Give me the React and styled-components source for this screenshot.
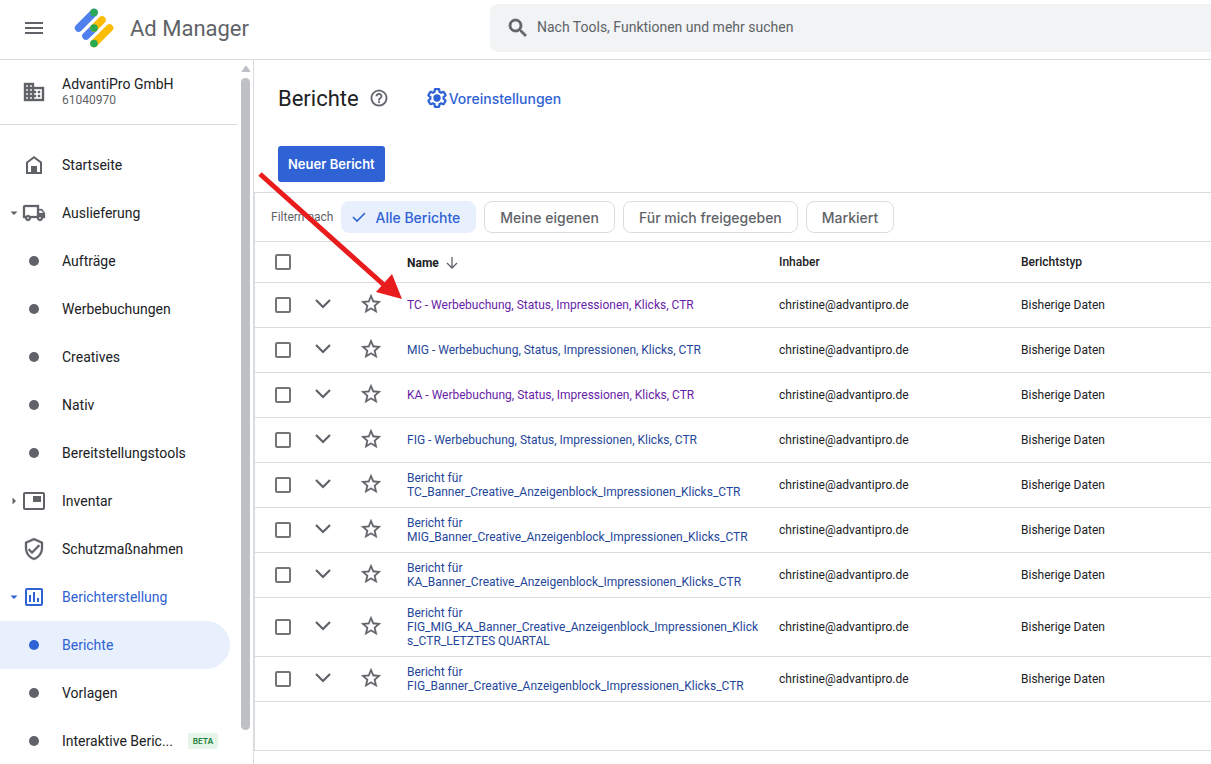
import styled, { createGlobalStyle } from 'styled-components'
import { MdMenu, MdSearch, MdDomain, MdOutlineLocalShipping, MdOutlineVerifiedUser, MdStarBorder, MdHelpOutline } from 'react-icons/md'

const GlobalStyle = createGlobalStyle`
    * {
        box-sizing: border-box;
    }
    body {
        margin: 0;
        background: #fff;
        color: #202124;
        font-family: Roboto, sans-serif;
        font-size: 12px;
    }
    svg {
        display: block;
        flex: none;
    }
    /* the material icons carry an empty bounding path */
    svg[stroke] path[fill='none'] {
        stroke: none;
    }
`
const Page = styled.div`
    position: relative;
    display: flex;
    flex-direction: column;
    height: 100vh;
    overflow: hidden;
`
const TopBar = styled.header`
    display: flex;
    flex: none;
    height: 60px;
    border-bottom: 1px solid #dadce0;
`
const Brand = styled.div`
    display: flex;
    flex: none;
    align-items: center;
    width: 490px;
    height: 56px;
    padding-left: 22px;
    color: #5f6368;
`
const IconButton = styled.button`
    display: inline-flex;
    padding: 0;
    border: 0;
    background: none;
    color: #5f6368;
    vertical-align: middle;
`
const Logo = styled.svg`
    margin: 0 16px 0 28px;
`
const BrandName = styled.span`
    font-size: 22px;
`
const SearchBox = styled.label`
    display: flex;
    flex: 1;
    align-items: center;
    gap: 7px;
    height: 48px;
    margin-top: 4px;
    padding-left: 16px;
    border-radius: 8px 0 0 8px;
    background: #f1f3f4;
    color: #5f6368;
`
const SearchInput = styled.input`
    flex: 1;
    height: 24px;
    padding: 0 0 2px;
    border: 0;
    outline: 0;
    background: none;
    font-family: inherit;
    font-size: 14px;

    &::placeholder {
        color: #5f6368;
        opacity: 1;
    }
`
const Body = styled.div`
    display: flex;
    flex: 1;
    min-height: 0;
`
const Sidebar = styled.aside`
    display: flex;
    flex: none;
    width: 254px;
    border-right: 1px solid #dadce0;
`
const SideContent = styled.div`
    flex: 1;
    overflow: hidden;
`
const Account = styled.div`
    display: flex;
    align-items: center;
    gap: 16px;
    height: 65px;
    padding-left: 22px;
    border-bottom: 1px solid #dadce0;
    color: #5f6368;
    line-height: 16px;
`
const AccountName = styled.div`
    color: #202124;
    font-size: 14px;
`
const Nav = styled.nav`
    padding-top: 16px;
`
const NavLink = styled.a`
    display: flex;
    align-items: center;
    width: 230px;
    height: 48px;
    padding-left: 10px;
    border-radius: 0 24px 24px 0;
    background: ${p => p.$active ? '#e8f0fe' : 'transparent'};
    color: ${p => p.$blue ? '#2f62d4' : '#202124'};
    font-size: 14px;
    text-decoration: none;
    white-space: nowrap;
`
const NavIcon = styled.span`
    display: flex;
    align-items: center;
    gap: 4px;
    width: 52px;
    color: ${p => p.$blue ? '#2f62d4' : '#5f6368'};
`
const IconSlot = styled.span`
    display: flex;
    justify-content: center;
    width: 24px;
`
const Dot = styled.span`
    width: 10px;
    height: 10px;
    border-radius: 50%;
    background: currentColor;
`
const Beta = styled.span`
    margin-left: auto;
    margin-right: 12px;
    width: 30px;
    border-radius: 2px;
    background: #e6f4ea;
    color: #188038;
    font-family: Inter, sans-serif;
    font-size: 8px;
    font-weight: 600;
    line-height: 16px;
    text-align: center;
`
const ScrollBar = styled.div`
    display: flex;
    flex-direction: column;
    align-items: center;
    gap: 5px;
    width: 15px;
    padding: 5px 0 34px;
    color: #bdc1c6;
`
const Thumb = styled.div`
    flex: 1;
    width: 9px;
    border-radius: 5px;
    background: #bdc1c6;
`
const Main = styled.main`
    flex: 1;
    min-width: 0;
`
const TitleRow = styled.div`
    display: flex;
    align-items: center;
    height: 76px;
    padding-left: 24px;
`
const Title = styled.h1`
    margin: 0 10px 0 0;
    font-size: 22px;
    font-weight: 400;
`
const Settings = styled.button`
    display: flex;
    align-items: center;
    margin-left: 36px;
    padding: 0;
    border: 0;
    background: none;
    color: #2f62d4;
    font-family: Inter, sans-serif;
    font-size: 14px;
    font-weight: 500;
`
const NewReport = styled.button`
    display: block;
    height: 36px;
    margin: 10px 24px;
    padding: 0 10px;
    border: 0;
    border-radius: 3px;
    background: #2f62d4;
    color: #fff;
    font-family: Inter, sans-serif;
    font-size: 13px;
    font-weight: 600;
`
const Panel = styled.section`
    border: 1px solid #dadce0;
    border-right: 0;
    padding-bottom: 48px;
`
const Filters = styled.div`
    display: flex;
    align-items: center;
    gap: 8px;
    height: 49px;
    padding-left: 16px;
    border-bottom: 1px solid #dadce0;
    color: #5f6368;
    white-space: nowrap;
`
const Chip = styled.button`
    display: flex;
    align-items: center;
    gap: 8px;
    height: 32px;
    padding: 0 15px;
    padding-left: ${p => p.$active ? 9 : 15}px;
    border: 1px solid ${p => p.$active ? '#e8f0fe' : '#dadce0'};
    border-radius: 8px;
    background: ${p => p.$active ? '#e8f0fe' : '#fff'};
    color: ${p => p.$active ? '#2f62d4' : '#5f6368'};
    font-family: Inter, sans-serif;
    font-size: 14px;
    font-weight: 500;
`
const Table = styled.table`
    width: 100%;
    table-layout: fixed;
    border-collapse: separate;
    border-spacing: 0;
    line-height: 14px;
`
const Col = styled.col`
    width: ${p => p.$w}px;
`
const Th = styled.th`
    height: 41px;
    padding: 0 8px;
    border-bottom: 1px solid #dadce0;
    font-weight: ${p => p.$sorted ? 700 : 500};
    text-align: left;
`
const Sort = styled.span`
    display: flex;
    align-items: center;
    gap: 7px;
    padding-top: 2px;
`
const Td = styled.td`
    height: 45px;
    padding: 8px;
    border-bottom: 1px solid #dadce0;
    overflow-wrap: break-word;
`
const Center = styled.div`
    display: flex;
    justify-content: center;
    padding-bottom: 2px;
`
const CheckCell = styled.div`
    display: flex;
    padding-left: 12px;
`
const Check = styled.input`
    appearance: none;
    width: 16px;
    height: 16px;
    margin: 0;
    border: 2px solid #757575;
    border-radius: 2px;
    background: #fff;
`
const ReportLink = styled.a`
    color: ${p => p.$visited ? '#681da8' : '#1f479b'};
    text-decoration: none;
`
const Arrow = styled.svg`
    position: absolute;
    left: 256px;
    top: 170px;
    pointer-events: none;
`

const HomeIcon = () => (
    <svg width="24" height="24" viewBox="0 0 24 24">
        <path d="M5 9.5 12 4.2l7 5.3V20H5z" fill="none" stroke="currentColor" strokeWidth="2" />
        <path d="M9 13h6v7H9z" fill="currentColor" />
    </svg>
)
const InventoryIcon = () => (
    <svg width="24" height="24" viewBox="0 0 24 24">
        <rect x="2" y="4" width="20" height="16" rx="1" fill="none" stroke="currentColor" strokeWidth="2" />
        <path d="M11 7h8v6h-8z" fill="currentColor" />
    </svg>
)
const ChartIcon = () => (
    <svg width="24" height="24" viewBox="0 0 24 24">
        <rect x="4" y="4" width="16" height="16" rx="1" fill="none" stroke="currentColor" strokeWidth="2" />
        <path d="M7 10h2v7H7zM11 7h2v10h-2zM15 13h2v4h-2z" fill="currentColor" />
    </svg>
)
const GearIcon = () => (
    <svg width="24" height="24" viewBox="-1 -1 26 26">
        <path fill="none" stroke="currentColor" strokeWidth="2.4" d="M19.14 12.94c.04-.3.06-.61.06-.94 0-.32-.02-.64-.07-.94l2.03-1.58c.18-.14.23-.41.12-.61l-1.92-3.32c-.12-.22-.37-.29-.59-.22l-2.39.96c-.5-.38-1.03-.7-1.62-.94l-.36-2.54c-.04-.24-.24-.41-.48-.41h-3.84c-.24 0-.43.17-.47.41l-.36 2.54c-.59.24-1.13.57-1.62.94l-2.39-.96c-.22-.08-.47 0-.59.22L2.74 8.87c-.12.21-.08.47.12.61l2.03 1.58c-.05.3-.09.63-.09.94s.02.64.07.94l-2.03 1.58c-.18.14-.23.41-.12.61l1.92 3.32c.12.22.37.29.59.22l2.39-.96c.5.38 1.03.7 1.62.94l.36 2.54c.05.24.24.41.48.41h3.84c.24 0 .44-.17.47-.41l.36-2.54c.59-.24 1.13-.56 1.62-.94l2.39.96c.22.08.47 0 .59-.22l1.92-3.32c.12-.22.07-.47-.12-.61z" />
        <circle cx="12" cy="12" r="4" fill="currentColor" />
    </svg>
)
const ChevronIcon = () => (
    <svg width="24" height="24" viewBox="0 0 24 24">
        <path d="m5 8 7 7 7-7" fill="none" stroke="currentColor" strokeWidth="2.2" />
    </svg>
)
const Caret = ({ dir }) => (
    <svg width="8" height="8" viewBox="0 0 8 8">
        {dir === 'down' && <path d="M.5 2.5h7L4 6z" fill="currentColor" />}
        {dir === 'right' && <path d="M2.5.5v7L6 4z" fill="currentColor" />}
    </svg>
)

const navItems = [
    { text: 'Startseite', icon: <HomeIcon /> },
    { text: 'Auslieferung', icon: <MdOutlineLocalShipping size={24} strokeWidth='0.3' />, caret: 'down' },
    { text: 'Aufträge' },
    { text: 'Werbebuchungen' },
    { text: 'Creatives' },
    { text: 'Nativ' },
    { text: 'Bereitstellungstools' },
    { text: 'Inventar', icon: <InventoryIcon />, caret: 'right' },
    { text: 'Schutzmaßnahmen', icon: <MdOutlineVerifiedUser size={24} strokeWidth='0.3' /> },
    { text: 'Berichterstellung', icon: <ChartIcon />, caret: 'down', blue: true },
    { text: 'Berichte', blue: true, active: true },
    { text: 'Vorlagen' },
    { text: 'Interaktive Beric...', beta: true },
]

const reports = [
    { name: 'TC - Werbebuchung, Status, Impressionen, Klicks, CTR', visited: true },
    { name: 'MIG - Werbebuchung, Status, Impressionen, Klicks, CTR' },
    { name: 'KA - Werbebuchung, Status, Impressionen, Klicks, CTR', visited: true },
    { name: 'FIG - Werbebuchung, Status, Impressionen, Klicks, CTR' },
    { name: 'Bericht für TC_Banner_Creative_Anzeigenblock_Impressionen_Klicks_CTR' },
    { name: 'Bericht für MIG_Banner_Creative_Anzeigenblock_Impressionen_Klicks_CTR' },
    { name: 'Bericht für KA_Banner_Creative_Anzeigenblock_Impressionen_Klicks_CTR' },
    { name: 'Bericht für FIG_MIG_KA_Banner_Creative_Anzeigenblock_Impressionen_Klicks_CTR_LETZTES QUARTAL' },
    { name: 'Bericht für FIG_Banner_Creative_Anzeigenblock_Impressionen_Klicks_CTR' },
]

function Header() {
    return (
        <TopBar>
            <Brand>
                <IconButton aria-label='Menü'><MdMenu size={24} /></IconButton>
                <Logo width="40" height="40" viewBox="0 0 40 40" strokeWidth="7.6" strokeLinecap="round">
                    <path d="M4.6 20 20 4.5M12 28l8-7.8" stroke="#4f80ee" />
                    <path d="m20 20 8-8M20 35.5 35.5 20" stroke="#fbbc04" />
                    <path d="M20 4.5h0M20 20h0M20 35.5h0" stroke="#28a952" />
                </Logo>
                <BrandName>Ad Manager</BrandName>
            </Brand>
            <SearchBox>
                <MdSearch size={24} strokeWidth='0.8' />
                <SearchInput type='text' aria-label='Suche' placeholder='Nach Tools, Funktionen und mehr suchen' />
            </SearchBox>
        </TopBar>
    )
}

function SideNav() {
    return (
        <Sidebar>
            <SideContent>
                <Account>
                    <MdDomain size={24} strokeWidth='0.4' />
                    <div>
                        <AccountName>AdvantiPro GmbH</AccountName>
                        61040970
                    </div>
                </Account>
                <Nav>
                    {navItems.map(item => (
                        <NavLink key={item.text} href='#' $active={item.active} $blue={item.blue}>
                            <NavIcon $blue={item.blue}>
                                <Caret dir={item.caret} />
                                <IconSlot>{item.icon || <Dot />}</IconSlot>
                            </NavIcon>
                            {item.text}
                            {item.beta && <Beta>BETA</Beta>}
                        </NavLink>
                    ))}
                </Nav>
            </SideContent>
            <ScrollBar>
                <svg width="10" height="8" viewBox="0 0 10 8">
                    <path d="M5 1 9 6.5H1z" fill="currentColor" stroke="currentColor" strokeLinejoin="round" />
                </svg>
                <Thumb />
            </ScrollBar>
        </Sidebar>
    )
}

function ReportTable() {
    return (
        <Table>
            <colgroup>
                <Col $w={48} />
                <Col $w={40} />
                <Col $w={56} />
                <Col $w={372} />
                <Col $w={242} />
                <col />
            </colgroup>
            <thead>
                <tr>
                    <Th><CheckCell><Check type='checkbox' aria-label='Alle auswählen' /></CheckCell></Th>
                    <Th />
                    <Th />
                    <Th $sorted>
                        <Sort>
                            Name
                            <svg width="12" height="12" viewBox="0 0 12 12">
                                <path d="M6 0v11M1 6l5 5 5-5" fill="none" stroke="#5f6368" strokeWidth="1.3" />
                            </svg>
                        </Sort>
                    </Th>
                    <Th>Inhaber</Th>
                    <Th>Berichtstyp</Th>
                </tr>
            </thead>
            <tbody>
                {reports.map(r => (
                    <tr key={r.name}>
                        <Td><CheckCell><Check type='checkbox' aria-label={r.name} /></CheckCell></Td>
                        <Td><Center><IconButton aria-label='Aufklappen'><ChevronIcon /></IconButton></Center></Td>
                        <Td><Center><IconButton aria-label='Markieren'><MdStarBorder size={24} strokeWidth='0.2' /></IconButton></Center></Td>
                        <Td><ReportLink href='#' $visited={r.visited}>{r.name}</ReportLink></Td>
                        <Td>christine@advantipro.de</Td>
                        <Td>Bisherige Daten</Td>
                    </tr>
                ))}
            </tbody>
        </Table>
    )
}

export default function App() {
    return (
        <Page>
            <GlobalStyle />
            <Header />
            <Body>
                <SideNav />
                <Main>
                    <TitleRow>
                        <Title>Berichte</Title>
                        <IconButton aria-label='Hilfe'><MdHelpOutline size={20} strokeWidth='0.2' /></IconButton>
                        <Settings><GearIcon />Voreinstellungen</Settings>
                    </TitleRow>
                    <NewReport>Neuer Bericht</NewReport>
                    <Panel>
                        <Filters>
                            <span>Filtern nach</span>
                            <Chip $active>
                                <svg width="16" height="16" viewBox="0 0 16 16">
                                    <path d="m2 8 4 4 8-8" fill="none" stroke="currentColor" strokeWidth="1.6" />
                                </svg>
                                Alle Berichte
                            </Chip>
                            <Chip>Meine eigenen</Chip>
                            <Chip>Für mich freigegeben</Chip>
                            <Chip>Markiert</Chip>
                        </Filters>
                        <ReportTable />
                    </Panel>
                </Main>
            </Body>
            <Arrow width="150" height="132" viewBox="0 0 150 132">
                <path d="m4 4 124 111" stroke="#e81c1c" strokeWidth="5" />
                <path d="m146 129-10-25-16 18z" fill="#e81c1c" />
            </Arrow>
        </Page>
    )
}
